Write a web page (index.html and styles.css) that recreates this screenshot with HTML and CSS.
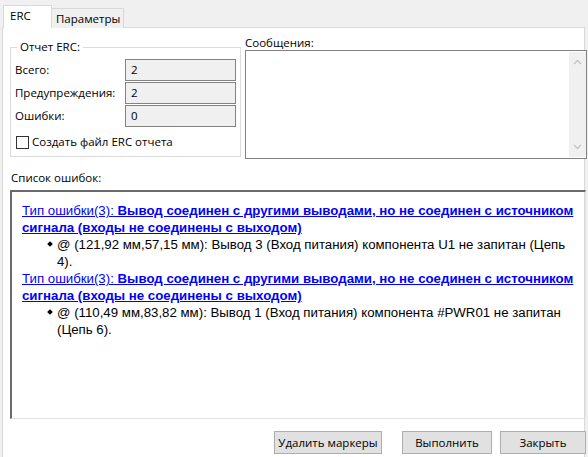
FILE: index.html
```html
<!DOCTYPE html>
<html lang="ru">
<head>
<meta charset="utf-8">
<title>ERC</title>
<link rel="stylesheet" href="styles.css">
</head>
<body>
<div class="dialog">
  <div class="tabs">
    <div class="tab tab-active">ERC</div>
    <div class="tab">Параметры</div>
  </div>
  <div class="panel">
    <div class="top-row">
      <div class="group">
        <span class="legend">Отчет ERC:</span>
        <div class="stats">
          <span class="stat-label">Всего:</span>
          <span class="stat-field">2</span>
          <span class="stat-label">Предупреждения:</span>
          <span class="stat-field">2</span>
          <span class="stat-label">Ошибки:</span>
          <span class="stat-field">0</span>
        </div>
        <label class="check"><span class="box"></span>Создать файл ERC отчета</label>
      </div>
      <div class="messages">
        <div class="caption">Сообщения:</div>
        <div class="msgbox">
          <div class="msg-content"></div>
          <div class="vscroll">
            <svg class="arrow" width="9" height="6" viewBox="0 0 9 6"><path d="M1 5 L4.5 1.5 L8 5" fill="none" stroke="#bfbfbf" stroke-width="1.2"/></svg>
            <svg class="arrow" width="9" height="6" viewBox="0 0 9 6"><path d="M1 1 L4.5 4.5 L8 1" fill="none" stroke="#bfbfbf" stroke-width="1.2"/></svg>
          </div>
        </div>
      </div>
    </div>
    <div class="list-caption">Список ошибок:</div>
    <div class="errlist">
      <div class="err-type"><a href="#"><span class="plain">Тип ошибки(3):</span> Вывод соединен с другими выводами, но не соединен с источником сигнала (входы не соединены с выходом)</a></div>
      <ul class="items">
        <li>@ (121,92 мм,57,15 мм): Вывод 3 (Вход питания) компонента U1 не запитан (Цепь 4).</li>
      </ul>
      <div class="err-type"><a href="#"><span class="plain">Тип ошибки(3):</span> Вывод соединен с другими выводами, но не соединен с источником сигнала (входы не соединены с выходом)</a></div>
      <ul class="items">
        <li>@ (110,49 мм,83,82 мм): Вывод 1 (Вход питания) компонента #PWR01 не запитан (Цепь 6).</li>
      </ul>
    </div>
    <div class="buttons">
      <button class="btn btn-wide">Удалить маркеры</button>
      <button class="btn btn-mid">Выполнить</button>
      <button class="btn btn-close">Закрыть</button>
    </div>
  </div>
</div>
</body>
</html>
```
FILE: styles.css
```css
html, body {
  margin: 0;
  padding: 0;
  background: #f0f0f0;
}
body {
  width: 588px;
  height: 457px;
  overflow: hidden;
  font-family: "Open Sans", "Noto Sans", sans-serif;
  font-size: 11.5px;
  color: #000;
}
.dialog {
  display: flex;
  flex-direction: column;
  height: 457px;
}
.tabs {
  display: flex;
  align-items: flex-end;
  height: 27px;
  padding-left: 3px;
}
.tab {
  box-sizing: border-box;
  height: 20px;
  padding: 0 5px;
  border: 1px solid #d9d9d9;
  border-bottom: none;
  background: #f0f0f0;
  line-height: 19px;
  margin-bottom: -1px;
  position: relative;
}
.tab-active {
  height: 23px;
  width: 49px;
  background: #fff;
  line-height: 20px;
  padding-left: 6px;
  z-index: 1;
}
.tab-active + .tab {
  border-left: none;
  width: 72px;
  padding-left: 4px;
}
.panel {
  flex: 1;
  margin-left: 2px;
  width: 583px;
  box-sizing: border-box;
  background: #fff;
  border: 1px solid #d9d9d9;
  border-bottom: none;
  display: flex;
  flex-direction: column;
}
.top-row {
  display: flex;
  align-items: flex-start;
  padding-left: 7px;
  gap: 4px;
}
.group {
  position: relative;
  box-sizing: border-box;
  margin-top: 19px;
  width: 231px;
  height: 110px;
  border: 1px solid #dcdcdc;
  padding: 11px 4px 0 4px;
}
.legend {
  position: absolute;
  top: -9px;
  left: 6px;
  padding: 0 3px;
  background: #fff;
  line-height: 16px;
}
.stats {
  display: grid;
  grid-template-columns: 110px 111px;
  row-gap: 1px;
}
.stat-label {
  line-height: 22px;
}
.stat-field {
  box-sizing: border-box;
  height: 22px;
  border: 1px solid #838383;
  background: #f0f0f0;
  padding-left: 5px;
  line-height: 20px;
}
.check {
  display: flex;
  align-items: center;
  margin-top: 8px;
  margin-left: 1px;
  line-height: 14px;
}
.box {
  box-sizing: border-box;
  width: 13px;
  height: 13px;
  border: 1px solid #333;
  background: #fff;
  margin-right: 3px;
}
.messages {
  margin-top: 8px;
  display: flex;
  flex-direction: column;
}
.caption {
  line-height: 14px;
  height: 14px;
}
.msgbox {
  box-sizing: border-box;
  width: 342px;
  height: 109px;
  border: 1px solid #828282;
  display: flex;
  background: #fff;
}
.msg-content {
  flex: 1;
}
.vscroll {
  width: 17px;
  margin: 1px 0 1px 0;
  background: #f0f0f0;
  display: flex;
  flex-direction: column;
  justify-content: space-between;
  align-items: center;
  padding: 7px 0 7px;
}
.arrow {
  display: block;
}
.list-caption {
  margin-top: 12px;
  margin-left: 8px;
  line-height: 14px;
  height: 19px;
}
.errlist {
  box-sizing: border-box;
  margin-left: 7px;
  width: 576px;
  height: 229px;
  border-top: 2px solid #6a6a6a;
  border-left: 2px solid #6a6a6a;
  border-right: 1px solid #e3e3e3;
  border-bottom: 1px solid #e3e3e3;
  padding: 10px 8px 0 10px;
  font-family: "Liberation Sans", Arial, sans-serif;
  font-size: 13.25px;
  line-height: 17px;
}
.err-type a {
  color: #0000ff;
  text-decoration: underline;
  font-weight: bold;
}
.err-type .plain {
  font-weight: normal;
}
.items {
  list-style: none;
  margin: 0;
  padding: 0 0 0 35px;
}
.items li {
  position: relative;
}
.items li::before {
  content: "";
  position: absolute;
  left: -9px;
  top: 6px;
  width: 4px;
  height: 4px;
  background: #000;
  transform: rotate(45deg);
}
.buttons {
  display: flex;
  justify-content: flex-end;
  margin-top: 12px;
  margin-right: -2px;
}
.btn {
  box-sizing: border-box;
  height: 23px;
  border: 1px solid #adadad;
  background: #e1e1e1;
  font-family: "Open Sans", "Noto Sans", sans-serif;
  font-size: 11.5px;
  color: #000;
  padding: 0;
}
.btn-wide { width: 108px; }
.btn-mid { width: 90px; margin-left: 20px; }
.btn-close { width: 86px; margin-left: 8px; }
```
